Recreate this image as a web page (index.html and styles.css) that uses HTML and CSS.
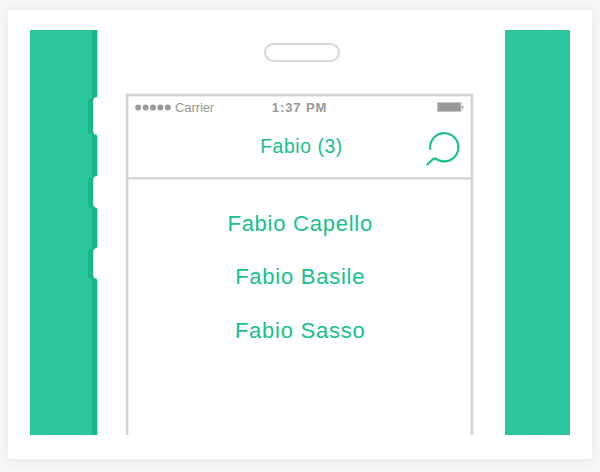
FILE: index.html
```html
<!DOCTYPE html>
<html lang="en">
<head>
<meta charset="utf-8">
<title>Fabio (3)</title>
<link rel="stylesheet" href="styles.css">
</head>
<body>
<main class="card">
  <div class="stage">
    <svg class="edge" width="68" height="405" viewBox="0 0 68 405" aria-hidden="true">
      <path class="edge-shade" d="M62 0H68V405H62V249.500Q58 249.500 58 245.500V222.500Q58 218.500 62 218.500V178Q58 178 58 174V151Q58 147 62 147V105Q58 105 58 101V72Q58 68 62 68Z"/>
      <path class="edge-body" d="M67.400 0V66.500Q67 67 65 67.500Q63.200 68 63.200 71V101Q63.200 104 65 104.300Q67 105 67.400 106V145.500Q67 146 65 146.500Q63.200 147 63.200 150V174Q63.200 177 65 177.300Q67 178 67.400 179V217Q67 218 65 218.500Q63.200 219 63.200 222V245Q63.200 248 65 248.300Q67 249 67.400 250V405H68V0Z"/>
    </svg>
    <section class="phone">
      <div class="speaker"></div>
      <div class="screen">
        <header class="header">
          <div class="status">
            <div class="carrier">
              <svg width="38" height="7" viewBox="0 0 38 7" aria-hidden="true"><g fill="#999"><circle cx="3.200" cy="3.500" r="3"/><circle cx="10.600" cy="3.500" r="3"/><circle cx="18" cy="3.500" r="3"/><circle cx="25.400" cy="3.500" r="3"/><circle cx="32.800" cy="3.500" r="3"/></g></svg>
              <span>Carrier</span>
            </div>
            <time class="time">1:37 PM</time>
            <svg class="battery" width="27" height="10" viewBox="0 0 27 10" aria-hidden="true"><rect x=".5" y=".5" width="23.500" height="9" fill="#999" stroke="#c4c4c4"/><path d="M25 3.300Q26.500 3.500 26.500 5T25 6.700Z" fill="#999"/></svg>
          </div>
          <div class="search-bar">
            <h1 class="title">Fabio (3)</h1>
            <svg class="search" width="36" height="36" viewBox="0 0 36 36" aria-hidden="true"><path d="M4.300 18A14.100 14.100 0 1 1 11.700 28.700C9.700 27.400 8.100 27.100 6.600 28.400L1.300 33.600"/></svg>
          </div>
        </header>
        <ul class="results">
          <li>Fabio Capello</li>
          <li>Fabio Basile</li>
          <li>Fabio Sasso</li>
        </ul>
      </div>
    </section>
  </div>
</main>
</body>
</html>
```
FILE: styles.css
```css
* { box-sizing: border-box; }
body {
  margin: 0;
  height: 472px;
  padding: 10px 8px 13px;
  overflow: hidden;
  background: #f7f7f7;
  font-family: "Liberation Sans", Arial, sans-serif;
}
.card {
  height: 449px;
  padding: 20px 22px;
  background: #fff;
  box-shadow: 0 1px 12px rgba(20, 50, 45, .09);
}
.stage {
  display: flex;
  height: 404.5px;
  overflow: hidden;
  background: #2bc69c;
}
.edge { flex: none; }
.edge-shade { fill: #17b887; }
.edge-body { fill: #fff; }
.phone {
  display: flex;
  flex-direction: column;
  align-items: center;
  width: 407px;
  padding: 13px 4px 0 0;
  background: #fff;
}
.speaker {
  flex: none;
  width: 76px;
  height: 19px;
  margin: 0 0 32px 5px;
  border: 2px solid #d8d8d8;
  border-radius: 10px;
}
.screen {
  flex: none;
  width: 347px;
  height: 345px;
  border: 2px solid #d3d3d3;
  border-bottom: 0;
  box-shadow: 0 0 0 1px #f4f4f4, inset 0 0 0 1px #eee;
}
.header {
  height: 83px;
  border-bottom: 2px solid #d8d8d8;
  box-shadow: 0 1px 0 #e6e6e6;
}
.status {
  display: grid;
  grid-template-columns: 1fr auto 1fr;
  align-items: center;
  height: 22px;
  padding: 0 7px;
  color: #999;
  font-size: 13px;
  line-height: 15px;
}
.carrier {
  display: flex;
  align-items: center;
  gap: 2px;
  letter-spacing: -.1px;
}
.time { font-weight: bold; letter-spacing: .9px; }
.battery { justify-self: end; }
.search-bar {
  display: grid;
  grid-template-columns: 1fr auto 1fr;
  height: 59px;
  padding-right: 9px;
}
.title {
  grid-column: 2;
  margin: 18px -11px 0 2px;
  font-size: 19.3px;
  line-height: 22px;
  font-weight: normal;
  letter-spacing: .6px;
  color: #17c18d;
}
.search {
  justify-self: end;
  margin-top: 13px;
  fill: none;
  stroke: #17c18d;
  stroke-width: 2.1;
  stroke-linecap: round;
}
.results {
  display: grid;
  grid-auto-rows: 53.3px;
  margin: 0;
  padding: 18px 0 0 1.4px;
  list-style: none;
  text-align: center;
  color: #17c18d;
  font-size: 22px;
  line-height: 53px;
  letter-spacing: .75px;
}
```
